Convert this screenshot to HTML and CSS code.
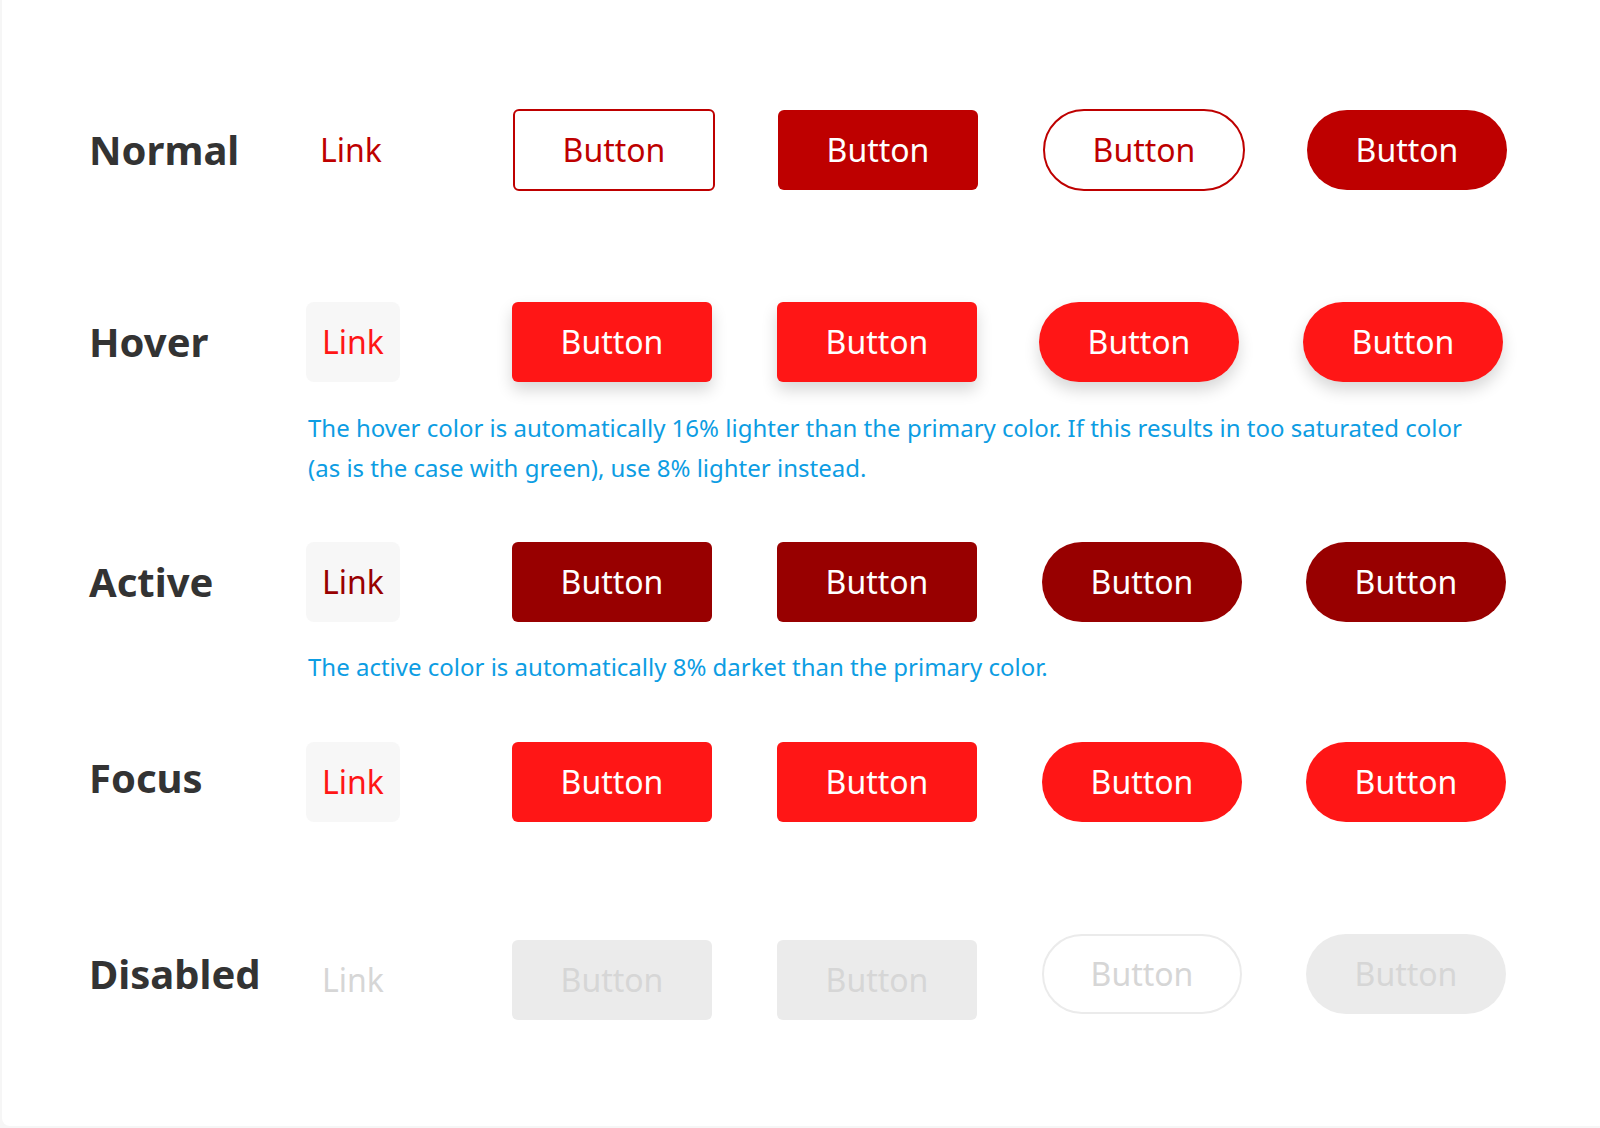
FILE: index.html
```html
<!DOCTYPE html>
<html lang="en">
<head>
<meta charset="utf-8">
<title>Button states</title>
<link rel="stylesheet" href="styles.css">
</head>
<body>
<div class="card">
  <div class="row row-normal">
    <div class="label">Normal</div>
    <div class="link">Link</div>
    <div class="btn rect outline">Button</div>
    <div class="btn rect filled">Button</div>
    <div class="btn pill outline">Button</div>
    <div class="btn pill filled">Button</div>
  </div>

  <div class="row row-hover">
    <div class="label">Hover</div>
    <div class="link boxed">Link</div>
    <div class="btn rect filled">Button</div>
    <div class="btn rect filled">Button</div>
    <div class="btn pill filled">Button</div>
    <div class="btn pill filled">Button</div>
  </div>
  <p class="note note-hover">The hover color is automatically 16% lighter than the primary color. If this results in too saturated color (as is the case with green), use 8% lighter instead.</p>

  <div class="row row-active">
    <div class="label">Active</div>
    <div class="link boxed">Link</div>
    <div class="btn rect filled">Button</div>
    <div class="btn rect filled">Button</div>
    <div class="btn pill filled">Button</div>
    <div class="btn pill filled">Button</div>
  </div>
  <p class="note note-active">The active color is automatically 8% darket than the primary color.</p>

  <div class="row row-focus">
    <div class="label">Focus</div>
    <div class="link boxed">Link</div>
    <div class="btn rect filled">Button</div>
    <div class="btn rect filled">Button</div>
    <div class="btn pill filled">Button</div>
    <div class="btn pill filled">Button</div>
  </div>

  <div class="row row-disabled">
    <div class="label">Disabled</div>
    <div class="link">Link</div>
    <div class="btn rect filled">Button</div>
    <div class="btn rect filled">Button</div>
    <div class="btn pill outline">Button</div>
    <div class="btn pill filled">Button</div>
  </div>
</div>
</body>
</html>
```
FILE: styles.css
```css
* { box-sizing: border-box; }

html, body {
  margin: 0;
  padding: 0;
}

body {
  background: #f6f6f6;
  font-family: "Noto Sans", "Open Sans", "DejaVu Sans", sans-serif;
  width: 1600px;
  height: 1128px;
  overflow: hidden;
}

.card {
  margin-left: 2px;
  width: 1598px;
  height: 1126px;
  background: #ffffff;
  border-radius: 0 0 0 8px;
  padding: 110px 0 0 88px;
}

.row {
  display: grid;
  grid-template-columns: 216px 206px 265px 265px 264px 200px;
  grid-auto-rows: 80px;
  align-items: center;
}

.row-hover { margin-top: 112px; }
.row-active { margin-top: 54px; }
.row-focus { margin-top: 55px; }
.row-disabled { margin-top: 112px; }

.label {
  font-size: 40px;
  font-weight: 700;
  color: #333333;
  line-height: 1;
  margin-left: -1px;
}

.row-focus .label { margin-bottom: 8px; }

.link {
  justify-self: start;
  height: 80px;
  padding: 0 16px;
  display: flex;
  align-items: center;
  font-size: 32px;
  line-height: 1;
  border-radius: 8px;
}

.link.boxed { background: #f7f7f7; }

.row-normal .link { color: #be0000; padding-left: 14px; }
.row-hover .link { color: #ff1616; }
.row-active .link { color: #980000; }
.row-focus .link { color: #ff1616; }
.row-disabled .link { color: #d6d6d6; }

.btn {
  width: 200px;
  height: 80px;
  display: flex;
  align-items: center;
  justify-content: center;
  font-size: 32px;
  line-height: 1;
  color: #ffffff;
}

.rect { border-radius: 6px; }
.pill { border-radius: 41px; }

.row-normal .btn { margin-left: 1px; }
.row-normal .filled { background: #be0000; }
.row-normal .outline {
  width: 202px;
  height: 82px;
  background: #ffffff;
  border: 2px solid #be0000;
  color: #be0000;
}

.row-hover .btn {
  background: #ff1616;
  box-shadow: 0 8px 16px rgba(0, 0, 0, 0.16);
}
.row-hover .pill { margin-left: -3px; }

.row-active .btn { background: #980000; }

.row-focus .btn { background: #ff1616; }

.row-disabled .btn {
  background: #ebebeb;
  color: #d6d6d6;
}
.row-disabled .outline {
  background: #ffffff;
  border: 2px solid #ebebeb;
}
.row-disabled .rect,
.row-disabled .link { margin-top: 12px; }

.note {
  margin: 0;
  padding-left: 218px;
  width: 1410px;
  font-size: 24px;
  line-height: 40px;
  color: #0d9de3;
}

.note-hover { margin-top: 26px; }
.note-active { margin-top: 25px; }
```
